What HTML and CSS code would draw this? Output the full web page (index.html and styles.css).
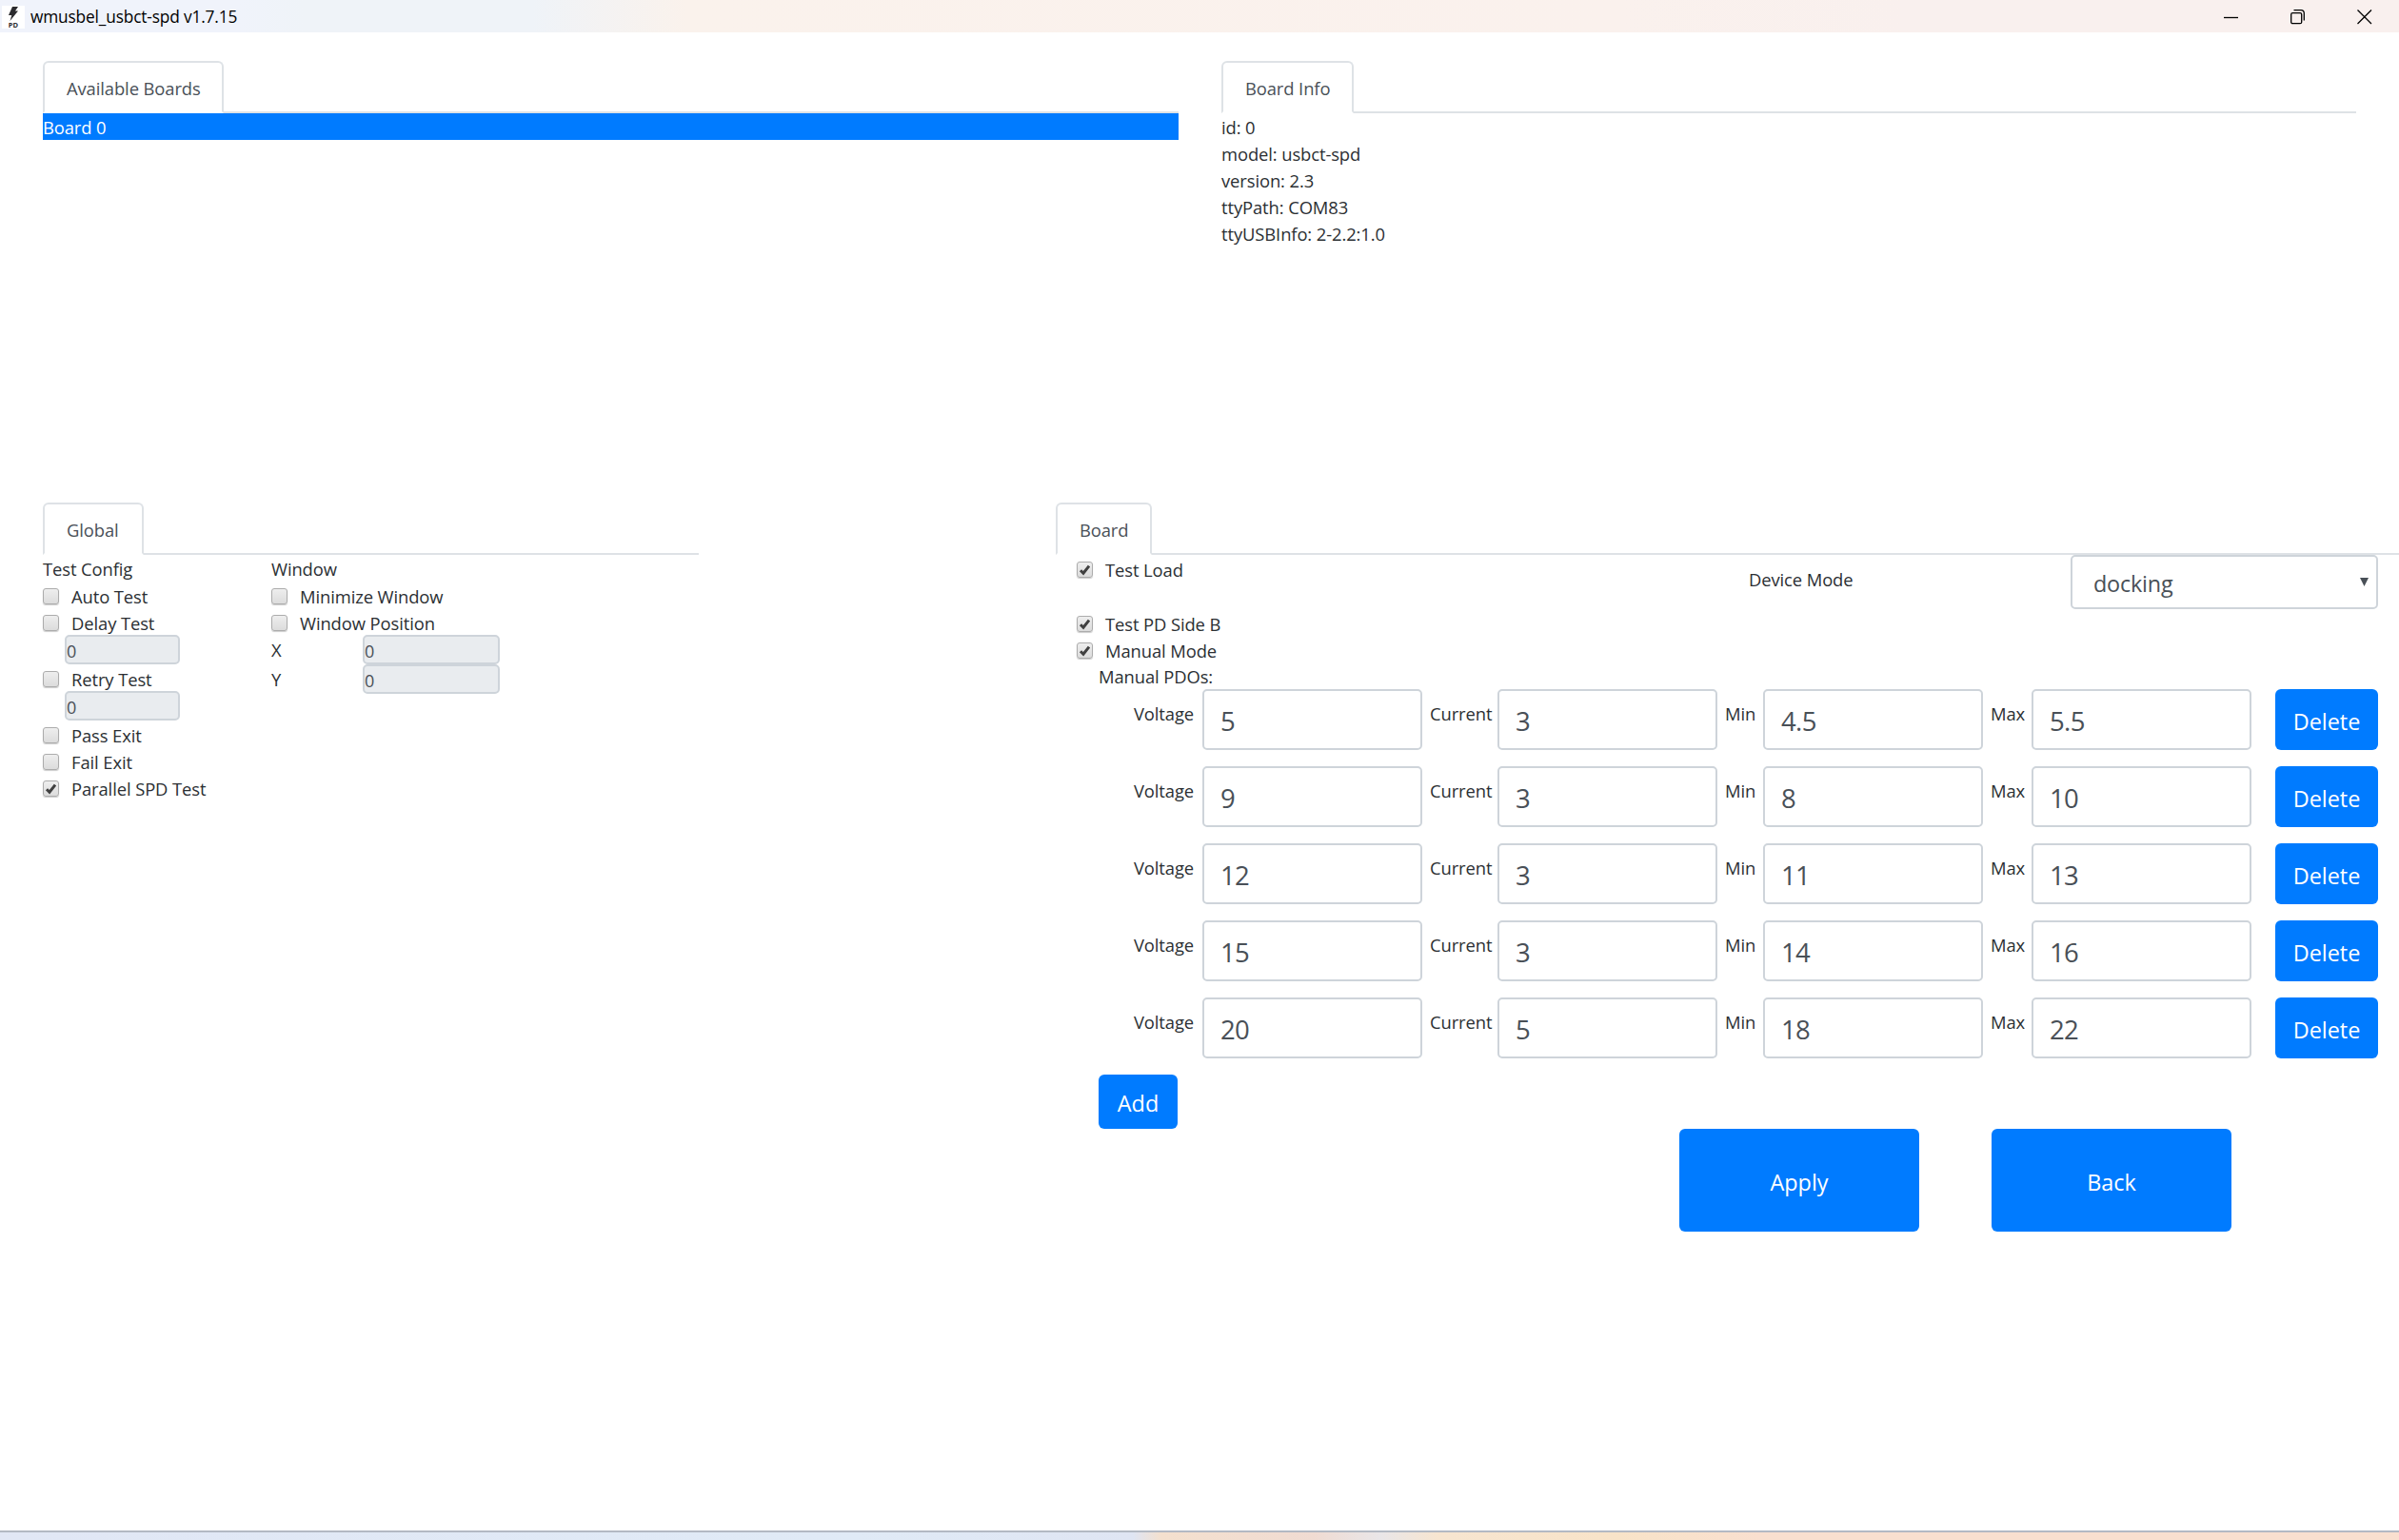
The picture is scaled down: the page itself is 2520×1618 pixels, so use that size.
FILE: index.html
```
<!DOCTYPE html>
<html lang="en">
<head>
    <meta charset="UTF-8" />
    <title>wmusbel_usbct-spd v1.7.15</title>
    <link rel="stylesheet" href="styles.css">
</head>
<body>

    <!-- Title bar -->
    <header class="titlebar">
        <svg class="app-icon" viewBox="0 0 24 24">
            <rect width="24" height="24" fill="#fff" />
            <path d="M11 1h6l-3 4.5h3L8.500 16l1.800-6H7z" fill="#2b2b2e" />
            <text x="12" y="23" text-anchor="middle" class="app-icon-text">PD</text>
        </svg>
        <span class="app-title">wmusbel_usbct-spd v1.7.15</span>
        <div class="window-buttons">
            <svg viewBox="0 0 16 16"><path d="M0 8.5h15" /></svg>
            <svg viewBox="0 0 16 16"><rect x=".7" y="3.7" width="11" height="11" rx="1.5" /><path d="M3.5.7h7.5a3.3 3.3 0 0 1 3.3 3.3v7.5" /></svg>
            <svg viewBox="0 0 16 16"><path d="M.5.5l14.5 14.5M15 .5L.5 15" /></svg>
        </div>
    </header>

    <main class="content">
        <div class="top-row">
            <section class="panel">
                <div class="tabs"><span class="tab tab-boards">Available Boards</span></div>
                <div class="line board-item">Board 0</div>
            </section>
            <section class="panel">
                <div class="tabs"><span class="tab tab-info">Board Info</span></div>
                <div class="line">id: 0</div>
                <div class="line">model: usbct-spd</div>
                <div class="line">version: 2.3</div>
                <div class="line">ttyPath: COM83</div>
                <div class="line">ttyUSBInfo: 2-2.2:1.0</div>
            </section>
        </div>

        <div class="bottom-row">
            <!-- Global settings -->
            <section class="global">
                <div class="tabs"><span class="tab tab-global">Global</span></div>
                <div class="global-body">
                    <div class="test-config">
                        <div class="line">Test Config</div>
                        <label class="check"><input type="checkbox" />Auto Test</label>
                        <label class="check"><input type="checkbox" />Delay Test</label>
                        <input class="small-input" type="text" value="0" disabled />
                        <label class="check"><input type="checkbox" />Retry Test</label>
                        <input class="small-input" type="text" value="0" disabled />
                        <label class="check"><input type="checkbox" />Pass Exit</label>
                        <label class="check"><input type="checkbox" />Fail Exit</label>
                        <label class="check"><input type="checkbox" checked />Parallel SPD Test</label>
                    </div>
                    <div class="window-config">
                        <div class="line">Window</div>
                        <label class="check"><input type="checkbox" />Minimize Window</label>
                        <label class="check"><input type="checkbox" />Window Position</label>
                        <div class="position"><span>X</span><input class="small-input" type="text" value="0" disabled /></div>
                        <div class="position"><span>Y</span><input class="small-input" type="text" value="0" disabled /></div>
                    </div>
                </div>
            </section>

            <!-- Board settings -->
            <section class="board">
                <div class="tabs"><span class="tab tab-board">Board</span></div>
                <div class="board-body">
                    <div class="load-row">
                        <label class="check"><input type="checkbox" checked />Test Load</label>
                        <span class="mode-label">Device Mode</span>
                        <select class="mode-select"><option>docking</option></select>
                    </div>
                    <label class="check"><input type="checkbox" checked />Test PD Side B</label>
                    <label class="check"><input type="checkbox" checked />Manual Mode</label>
                    <div class="line pdo-title">Manual PDOs:</div>
                    <div id="pdoList"></div>
                    <button class="btn add-btn">Add</button>
                    <div class="actions">
                        <button class="btn">Apply</button>
                        <button class="btn">Back</button>
                    </div>
                </div>
            </section>
        </div>
    </main>

    <footer class="taskbar"></footer>

    <script>
  const pdos = [
    { voltage: 5, current: 3, min: 4.5, max: 5.5 },
    { voltage: 9, current: 3, min: 8, max: 10 },
    { voltage: 12, current: 3, min: 11, max: 13 },
    { voltage: 15, current: 3, min: 14, max: 16 },
    { voltage: 20, current: 5, min: 18, max: 22 }
  ];

  const pdoList = document.getElementById('pdoList');

  pdos.forEach(pdo => {
    const row = document.createElement('div');
    row.className = 'pdo';
    row.innerHTML = `
      <label>Voltage</label><input type="text" value="${pdo.voltage}" />
      <label>Current</label><input type="text" value="${pdo.current}" />
      <label>Min</label><input type="text" value="${pdo.min}" />
      <label>Max</label><input type="text" value="${pdo.max}" />
      <button class="btn">Delete</button>
    `;
    pdoList.appendChild(row);
  });
    </script>

</body>
</html>
```
FILE: styles.css
```
* {
    box-sizing: border-box;
}

body {
    margin: 0;
    height: 1618px;
    display: flex;
    flex-direction: column;
    overflow: hidden;
    background: #fff;
    color: #2b2f33;
    font-family: "Open Sans", "Noto Sans", sans-serif;
    font-size: 18.4px;
    line-height: 30px;
    letter-spacing: -0.1px;
}

input, select, button {
    font-family: inherit;
    margin: 0;
}

.titlebar {
    height: 34px;
    display: flex;
    align-items: center;
    padding: 1px 28px 0 2px;
    background: linear-gradient(90deg, #f0f3fb 0, #f0f3fb 250px, #eff3f8 320px, #eff3f8 560px, #faf2ec 720px, #faf1ed 1700px, #f9f0ee 2000px);
    color: #000;
    font-size: 17.3px;
    letter-spacing: -0.15px;
}

.app-icon {
    width: 24px;
    height: 24px;
    margin-right: 6px;
}

.app-icon-text {
    font-size: 7.5px;
    font-weight: bold;
    letter-spacing: 0;
    fill: #2b2b2e;
}

.window-buttons {
    display: flex;
    gap: 54px;
    margin-left: auto;
}

.window-buttons svg {
    width: 16px;
    height: 16px;
    fill: none;
    stroke: #000;
    stroke-width: 1.3;
}

.content {
    flex: 1;
}

.line {
    height: 28px;
}

.top-row {
    display: grid;
    grid-template-columns: 1193px 1192px;
    gap: 45px;
    height: 494px;
    padding: 30px 45px 0;
}

.tabs {
    display: flex;
    height: 55px;
    border-bottom: 2px solid #dee2e6;
}

.tab {
    height: 55px;
    padding: 12px 0 0 23px;
    border: 2px solid #dee2e6;
    border-bottom-color: #fff;
    border-radius: 6px 6px 0 0;
    color: #495057;
}

.tab-boards {
    width: 190px;
}

.tab-info {
    width: 139px;
}

.tab-global {
    width: 106px;
}

.tab-board {
    width: 101px;
}

.board-item {
    background: #007bff;
    color: #fff;
}

.bottom-row {
    display: flex;
    justify-content: space-between;
    padding-left: 45px;
}

.global {
    width: 689px;
}

.board {
    width: 1411px;
}

.global-body {
    display: grid;
    grid-template-columns: 240px 240px;
}

.check {
    display: flex;
    align-items: center;
    gap: 13px;
    height: 28px;
    padding-top: 3px;
}

.check input {
    appearance: none;
    width: 17px;
    height: 17px;
    border: 1px solid #acacac;
    border-radius: 3px;
    background: linear-gradient(#eee, #dcdcdc);
    box-shadow: 0 1px 1px #ccc;
}

.check input:checked {
    background: url("data:image/svg+xml,%3Csvg xmlns='http://www.w3.org/2000/svg' viewBox='0 0 15 15'%3E%3Cpath d='M3 8.2l3 3L12 3.6' fill='none' stroke='%23404040' stroke-width='3'/%3E%3C/svg%3E"), linear-gradient(#eee, #dcdcdc);
}

.small-input {
    display: block;
    width: 121px;
    height: 31px;
    padding: 2px 0 0;
    border: 2px solid #ced4da;
    border-radius: 5px;
    background: #e9ecef;
    color: #495057;
    font-size: 18px;
    letter-spacing: -0.3px;
}

.test-config .small-input {
    margin-left: 23px;
}

.position {
    display: flex;
    justify-content: space-between;
    align-items: center;
    height: 31px;
}

.position .small-input {
    width: 144px;
}

.board-body {
    padding-left: 22px;
}

.load-row {
    display: flex;
    height: 57px;
}

.load-row .check {
    width: 706px;
}

.mode-label {
    width: 338px;
    padding-top: 11px;
}

.mode-select {
    appearance: none;
    width: 323px;
    height: 57px;
    padding: 2px 22px 0;
    border: 2px solid #ced4da;
    border-radius: 5px;
    background: url("data:image/svg+xml,%3Csvg xmlns='http://www.w3.org/2000/svg' viewBox='0 0 9 9'%3E%3Cpath d='M0 0h9L4.5 9z' fill='%23495057'/%3E%3C/svg%3E") right 8px top 22px / 9px 9px no-repeat #fff;
    color: #495057;
    font-size: 23.4px;
    letter-spacing: -0.2px;
}

.pdo-title {
    padding-left: 23px;
}

.pdo {
    display: grid;
    grid-template-columns: 72px 231px 79px 231px 48px 231px 51px 231px 108px;
    height: 64px;
    margin: 0 0 17px 60px;
}

.pdo label {
    padding: 11px 0 0 8px;
}

.pdo label:first-child {
    padding-left: 0;
}

.pdo input {
    height: 64px;
    padding: 3px 17px 0;
    border: 2px solid #ced4da;
    border-radius: 5px;
    color: #495057;
    font-size: 27.5px;
    letter-spacing: -0.6px;
}

.pdo .btn {
    margin-left: 25px;
    width: 108px;
}

.btn {
    padding: 3px 0 0;
    border: none;
    border-radius: 6px;
    background: #007bff;
    color: #fff;
    font-size: 23.4px;
}

.add-btn {
    display: block;
    width: 83px;
    height: 57px;
    margin-left: 23px;
}

.actions {
    display: flex;
    gap: 76px;
    padding-left: 633px;
}

.actions .btn {
    width: 252px;
    height: 108px;
}

.taskbar {
    height: 10px;
    border-top: 2px solid #b3b9c3;
    background: linear-gradient(90deg, #e1e7f5 0, #e0eaf6 900px, #dfe5f3 1190px, #f4e0ce 1220px, #f0dbd2 1380px, #e9e6e8 1450px, #f7e5d0 1510px, #f8e3c8 1700px, #f9dfcf 1850px, #f9dfcf 2520px);
}
```
